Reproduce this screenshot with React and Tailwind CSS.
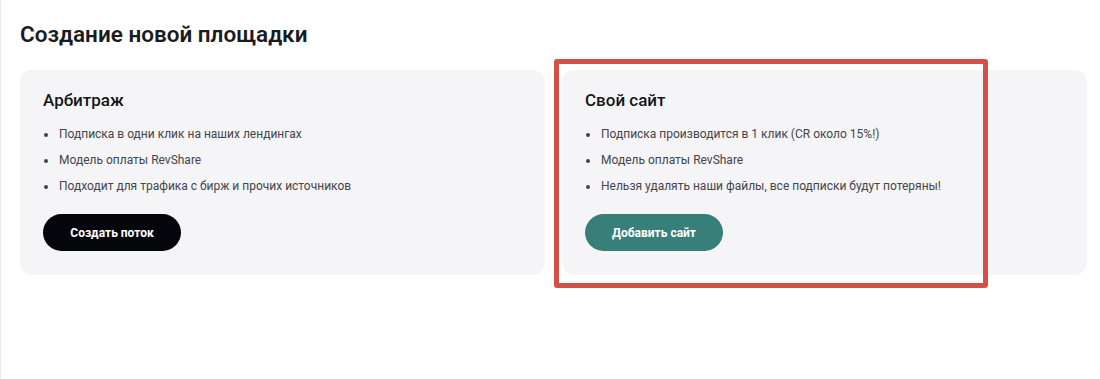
const cards = [
  {
    title: "Арбитраж",
    items: [
      "Подписка в одни клик на наших лендингах",
      "Модель оплаты RevShare",
      "Подходит для трафика с бирж и прочих источников",
    ],
    button: "Создать поток",
    btn: "bg-[#05060b]",
  },
  {
    title: "Свой сайт",
    items: [
      "Подписка производится в 1 клик (CR около 15%!)",
      "Модель оплаты RevShare",
      "Нельзя удалять наши файлы, все подписки будут потеряны!",
    ],
    button: "Добавить сайт",
    btn: "bg-[#387f7a]",
  },
];

export default function App() {
  return (
    <div className="relative h-[379px] w-[1100px] overflow-hidden bg-white border-l border-[#ececf0] font-['Roboto',sans-serif]">
      <h1 className="pl-[19px] pt-[20px] text-[22.5px] leading-[28px] font-semibold text-[#1b1b1f]">
        Создание новой площадки
      </h1>
      <div className="ml-[19px] mt-[22px] grid w-[1067px] grid-cols-2 gap-[17px]">
        {cards.map((c) => (
          <div key={c.title} className="h-[205px] rounded-[12px] bg-[#f5f5f8] pl-[23px] pt-[20px]">
            <h2 className="text-[17px] leading-[20px] font-medium text-[#151518]">{c.title}</h2>
            <ul className="mt-[16px] flex flex-col gap-[10px] pl-[15px] list-disc text-[12px] leading-[16px] text-[#44444a]">
              {c.items.map((t) => (
                <li key={t} className="pl-[1px]">{t}</li>
              ))}
            </ul>
            <button
              className={`mt-[20px] h-[37px] w-[138px] rounded-full text-[12px] font-bold text-white ${c.btn}`}
            >
              {c.button}
            </button>
          </div>
        ))}
      </div>
      <div className="absolute left-[553px] top-[59px] h-[229px] w-[434px] rounded-[3px] border-[5px] border-[#d6504a]" />
    </div>
  );
}
